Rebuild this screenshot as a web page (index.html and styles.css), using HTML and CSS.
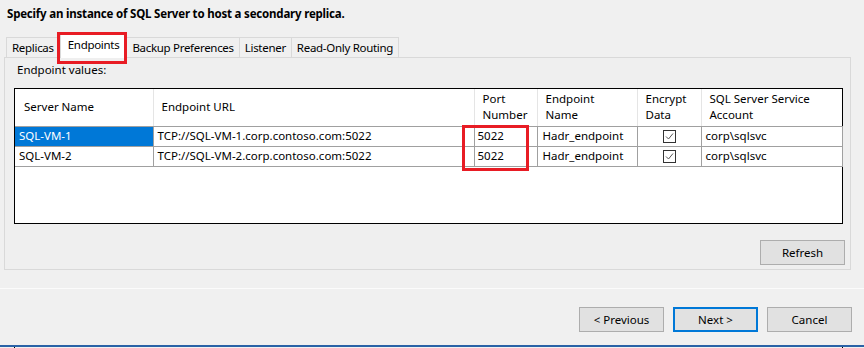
FILE: index.html
```html
<!DOCTYPE html>
<html lang="en">
<head>
    <meta charset="UTF-8">
    <title>Add Replica to Availability Group</title>
    <link rel="stylesheet" href="styles.css">
</head>
<body>
    <div class="wizard">
        <h1 class="title">Specify an instance of SQL Server to host a secondary replica.</h1>

        <div class="tabs">
            <div class="tab">Replicas</div>
            <div class="tab active">Endpoints<span class="mark mark-tab"></span></div>
            <div class="tab">Backup Preferences</div>
            <div class="tab">Listener</div>
            <div class="tab">Read-Only Routing</div>
        </div>

        <div class="panel">
            <div class="panel-label">Endpoint values:</div>

            <div class="grid">
                <table>
                    <colgroup>
                        <col style="width:138px">
                        <col style="width:321px">
                        <col style="width:63px">
                        <col style="width:100px">
                        <col style="width:64px">
                        <col style="width:141px">
                    </colgroup>
                    <thead>
                        <tr>
                            <th class="first">Server Name</th>
                            <th>Endpoint URL</th>
                            <th>Port<br>Number</th>
                            <th>Endpoint<br>Name</th>
                            <th>Encrypt<br>Data</th>
                            <th>SQL Server Service<br>Account</th>
                        </tr>
                    </thead>
                    <tbody>
                        <tr>
                            <td class="selected">SQL-VM-1</td>
                            <td>TCP://SQL-VM-1.corp.contoso.com:5022</td>
                            <td class="port">5022<span class="mark mark-port"></span></td>
                            <td class="ep-name">Hadr_endpoint</td>
                            <td class="check">
                                <svg width="13" height="13" viewBox="0 0 13 13"><rect x="0.5" y="0.5" width="12" height="12" fill="#fff" stroke="#333"/><path d="M3 6.5 L5.5 9 L10 3.5" fill="none" stroke="#555" stroke-width="1"/></svg>
                            </td>
                            <td>corp\sqlsvc</td>
                        </tr>
                        <tr>
                            <td>SQL-VM-2</td>
                            <td>TCP://SQL-VM-2.corp.contoso.com:5022</td>
                            <td class="port">5022</td>
                            <td class="ep-name">Hadr_endpoint</td>
                            <td class="check">
                                <svg width="13" height="13" viewBox="0 0 13 13"><rect x="0.5" y="0.5" width="12" height="12" fill="#fff" stroke="#333"/><path d="M3 6.5 L5.5 9 L10 3.5" fill="none" stroke="#555" stroke-width="1"/></svg>
                            </td>
                            <td>corp\sqlsvc</td>
                        </tr>
                    </tbody>
                </table>
            </div>

            <div class="panel-actions">
                <button type="button" class="btn">Refresh</button>
            </div>
        </div>

        <div class="footer">
            <button type="button" class="btn">&lt; Previous</button>
            <button type="button" class="btn btn-default">Next &gt;</button>
            <button type="button" class="btn">Cancel</button>
        </div>

        <div class="taskbar"></div>
        <div class="taskbar-edge"></div>
    </div>
</body>
</html>
```

FILE: styles.css
```css
* {
    margin: 0;
    padding: 0;
    box-sizing: border-box;
}

body {
    font-family: "Noto Sans", "Liberation Sans", sans-serif;
    font-size: 11.5px;
    color: #000;
    background: #f0f0f0;
    width: 864px;
    height: 348px;
    overflow: hidden;
}

.wizard {
    display: flex;
    flex-direction: column;
    height: 348px;
}

/* title */
.title {
    font-size: 11.5px;
    font-weight: bold;
    letter-spacing: -0.2px;
    line-height: 16px;
    height: 33px;
    padding: 6px 0 0 7px;
}

/* tab strip */
.tabs {
    display: flex;
    align-items: flex-end;
    height: 24px;
    padding-left: 6px;
    position: relative;
    z-index: 1;
}

.tab {
    height: 20px;
    line-height: 20px;
    padding: 0 5px;
    letter-spacing: -0.3px;
    border: 1px solid #d9d9d9;
    border-bottom: none;
    border-left: none;
    background: #f0f0f0;
    white-space: nowrap;
}

.tab:first-child {
    border-left: 1px solid #d9d9d9;
}

.tab.active {
    height: 25px;
    margin-bottom: -1px;
    line-height: 22px;
    background: #fff;
    border-left: 1px solid #d9d9d9;
    position: relative;
    padding: 0 7px;
}

.tab.active + .tab {
    border-left: none;
}

/* red annotation boxes */
.mark {
    position: absolute;
    border: 3px solid #e81c24;
    pointer-events: none;
}

.mark-tab {
    left: -4px;
    top: -2px;
    width: calc(100% + 5px);
    height: 32px;
}

.mark-port {
    left: -13px;
    top: -2px;
    width: 67px;
    height: 46px;
}

/* tab page */
.panel {
    margin-left: 4px;
    width: 847px;
    height: 213px;
    border: 1px solid #d9d9d9;
    background: #efefef;
    padding: 4px 0 0 0;
    display: flex;
    flex-direction: column;
}

.panel-label {
    line-height: 16px;
    padding-left: 12px;
    margin-bottom: 10px;
}

.grid {
    margin-left: 9px;
    width: 829px;
    height: 136px;
    border: 1px solid #000;
    background: #fff;
}

table {
    border-collapse: collapse;
    table-layout: fixed;
    width: 827px;
}

th {
    height: 37px;
    font-weight: normal;
    text-align: left;
    line-height: 16px;
    padding: 0 0 0 8px;
    border-left: 1px solid #e5e5e5;
    border-bottom: 1px solid #a0a0a0;
    vertical-align: middle;
}

th.first {
    border-left: none;
    padding-left: 9px;
}

td {
    height: 20px;
    line-height: 18px;
    padding: 0 4px;
    border: 1px solid #a0a0a0;
    border-top: none;
    white-space: nowrap;
}

td:first-child {
    border-left: none;
}

td.selected {
    background: #0078d7;
    color: #fff;
}

td.port {
    position: relative;
    padding-left: 3px;
}

td.ep-name {
    padding-left: 5px;
}

td.check {
    text-align: center;
    padding: 0;
}

td.check svg {
    display: block;
    margin: 0 auto;
}

.panel-actions {
    display: flex;
    justify-content: flex-end;
    margin-top: 16px;
    padding-right: 5px;
}

/* buttons */
.btn {
    font-family: inherit;
    font-size: 11.5px;
    color: #000;
    width: 85px;
    height: 25px;
    background: #e1e1e1;
    border: 1px solid #adadad;
    cursor: pointer;
}

.btn-default {
    border: 2px solid #0078d7;
}

/* footer */
.footer {
    margin-top: 18px;
    border-top: 1px solid #fbfbfb;
    padding: 18px 12px 0 0;
    display: flex;
    justify-content: flex-end;
    gap: 9px;
    height: 57px;
}

.taskbar {
    height: 2px;
    background: #2a62a6;
}

.taskbar-edge {
    height: 1px;
    margin: 0 21px 0 14px;
    border-left: 1px solid #000;
    border-right: 1px solid #000;
}
```
